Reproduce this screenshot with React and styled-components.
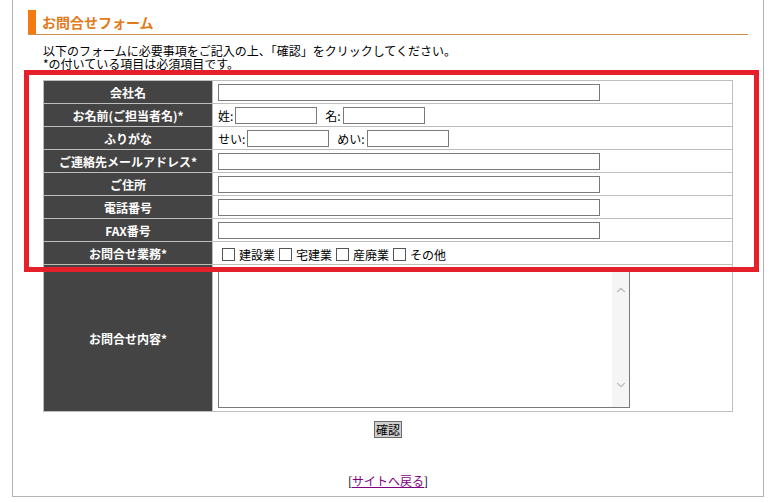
import React from "react";
import styled, { createGlobalStyle } from "styled-components";
import { ChevronUp, ChevronDown } from "lucide-react";

const GlobalStyle = createGlobalStyle`
  html, body {
    margin: 0;
    padding: 0;
    background: #fff;
  }
  body {
    font-family: "Noto Sans CJK JP", "Liberation Sans", sans-serif;
    font-size: 12px;
    color: #000;
  }
`;

const rows = [
  { label: "会社名", kind: "text" },
  { label: "お名前(ご担当者名)*", kind: "pair", a: "姓:", b: "名:" },
  { label: "ふりがな", kind: "pair", a: "せい:", b: "めい:" },
  { label: "ご連絡先メールアドレス*", kind: "text" },
  { label: "ご住所", kind: "text" },
  { label: "電話番号", kind: "text" },
  { label: "FAX番号", kind: "text" },
  { label: "お問合せ業務*", kind: "check" },
];

const services = ["建設業", "宅建業", "産廃業", "その他"];

export default function App() {
  return (
    <>
      <GlobalStyle />
      <Page>
        <Heading>
          <HeadingBar />
          <HeadingText>お問合せフォーム</HeadingText>
        </Heading>
        <Intro>
          以下のフォームに必要事項をご記入の上、「確認」をクリックしてください。
          <br />
          *の付いている項目は必須項目です。
        </Intro>
        <FormTable>
          <tbody>
            {rows.map((r) => (
              <Row key={r.label}>
                <Label>{r.label}</Label>
                <Field>
                  {r.kind === "text" && <TextInput type="text" />}
                  {r.kind === "pair" && (
                    <Inline>
                      {r.a}
                      <TextInput type="text" $w={82} $pad />
                      <Spacer $w={8} />
                      {r.b}
                      <TextInput type="text" $w={82} $pad />
                    </Inline>
                  )}
                  {r.kind === "check" && (
                    <Inline>
                      {services.map((s) => (
                        <CheckLabel key={s}>
                          <Check type="checkbox" />
                          {s}
                        </CheckLabel>
                      ))}
                    </Inline>
                  )}
                </Field>
              </Row>
            ))}
            <Row>
              <Label $tall>お問合せ内容*</Label>
              <Field>
                <AreaBox>
                  <Area />
                  <ScrollTrack>
                    <ChevronUp size={14} strokeWidth={2} color="#bdbdbd" />
                    <ChevronDown size={14} strokeWidth={2} color="#bdbdbd" />
                  </ScrollTrack>
                </AreaBox>
              </Field>
            </Row>
          </tbody>
        </FormTable>
        <ButtonRow>
          <ConfirmButton type="button">確認</ConfirmButton>
        </ButtonRow>
        <BackRow>
          [<BackLink href="#">サイトへ戻る</BackLink>]
        </BackRow>
        <Highlight />
      </Page>
    </>
  );
}

const Page = styled.div`
  position: relative;
  box-sizing: border-box;
  margin-left: 12px;
  width: 752px;
  height: 497px;
  border: 1px solid #b4b4b4;
  border-top: none;
  padding: 10px 15px 0;
`;

const Heading = styled.div`
  display: flex;
  align-items: center;
  height: 24px;
  border-bottom: 1px solid #c9904f;
`;

const HeadingBar = styled.span`
  width: 8px;
  height: 24px;
  background: #f27a10;
`;

const HeadingText = styled.h2`
  margin: 0 0 0 6px;
  font-size: 14px;
  font-weight: bold;
  color: #e27a1c;
`;

const Intro = styled.p`
  margin: 9px 15px 0;
  font-size: 12px;
  line-height: 13px;
`;

const FormTable = styled.table`
  margin: 10px 15px 0;
  width: 690px;
  border-collapse: collapse;
  table-layout: fixed;
`;

const Row = styled.tr``;

const Label = styled.th`
  width: 168px;
  height: ${(p) => (p.$tall ? "145px" : "22px")};
  padding: 0;
  background: #444;
  color: #fff;
  font-size: 12px;
  font-weight: bold;
  text-align: center;
  vertical-align: middle;
  border: 1px solid #bdbdbd;
  white-space: nowrap;
`;

const Field = styled.td`
  padding: 0 5px;
  border: 1px solid #bdbdbd;
  vertical-align: middle;
`;

const Inline = styled.div`
  display: flex;
  align-items: center;
  font-size: 12px;
  white-space: nowrap;
`;

const Spacer = styled.span`
  width: ${(p) => p.$w}px;
`;

const TextInput = styled.input`
  display: block;
  box-sizing: border-box;
  width: ${(p) => (p.$w ? `${p.$w}px` : "382px")};
  height: 17px;
  margin: 0 0 0 ${(p) => (p.$pad ? "2px" : "0")};
  padding: 0 2px;
  border: 1px solid #7a7a7a;
  background: #fff;
  font: inherit;
`;

const CheckLabel = styled.label`
  display: flex;
  align-items: center;
  margin-top: 2px;
`;

const Check = styled.input`
  appearance: none;
  box-sizing: border-box;
  width: 13px;
  height: 13px;
  margin: 0 4px;
  border: 1px solid #555;
  background: #fff;
`;

const AreaBox = styled.div`
  display: flex;
  box-sizing: border-box;
  width: 412px;
  height: 139px;
  margin: 4px 0 3px;
  border: 1px solid #7a7a7a;
  background: #fff;
`;

const Area = styled.textarea`
  flex: 1;
  border: none;
  resize: none;
  outline: none;
  font: inherit;
  padding: 2px;
`;

const ScrollTrack = styled.div`
  display: flex;
  flex-direction: column;
  justify-content: space-between;
  align-items: center;
  width: 17px;
  padding: 13px 0 15px;
  background: #f5f5f5;
`;

const ButtonRow = styled.div`
  display: flex;
  justify-content: center;
  margin-top: 9px;
`;

const ConfirmButton = styled.button`
  box-sizing: border-box;
  height: 17px;
  padding: 0 1px;
  border: 1px solid #6a6a6a;
  background: #cfcfcf;
  font-family: "Noto Sans CJK JP", sans-serif;
  font-size: 12px;
  line-height: 14px;
  color: #000;
`;

const BackRow = styled.div`
  margin-top: 34px;
  text-align: center;
  font-size: 12px;
`;

const BackLink = styled.a`
  color: #800080;
  text-decoration: underline;
`;

const Highlight = styled.div`
  position: absolute;
  left: 11px;
  top: 70px;
  width: 735px;
  height: 202px;
  box-sizing: border-box;
  border: 5px solid #e5202b;
  pointer-events: none;
`;
